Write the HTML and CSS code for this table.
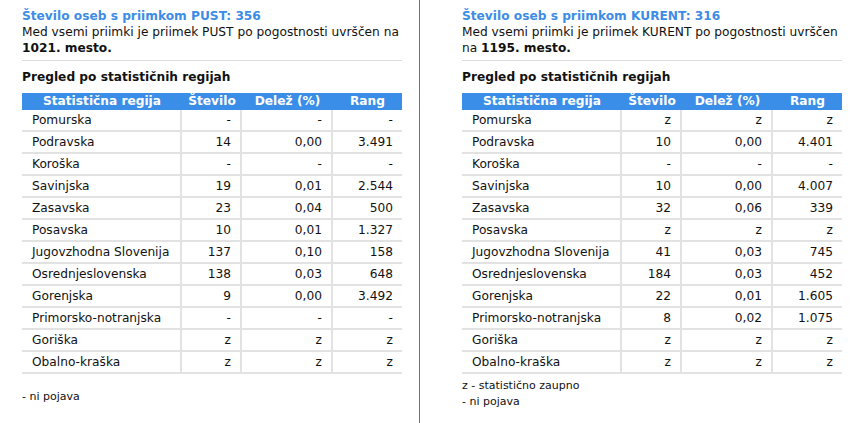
FILE: index.html
```html
<!DOCTYPE html>
<html lang="sl">
<head>
<meta charset="utf-8">
<title>Priimki</title>
<link rel="stylesheet" href="styles.css">
</head>
<body>
<div class="page">
  <section class="panel panel-left">
    <h2 class="title">Število oseb s priimkom PUST: 356</h2>
    <p class="intro">Med vsemi priimki je priimek PUST po pogostnosti uvrščen na <b>1021. mesto.</b></p>
    <hr class="sep">
    <h3 class="subtitle">Pregled po statističnih regijah</h3>
    <table class="stats">
      <thead>
        <tr><th class="c1">Statistična regija</th><th class="c2">Število</th><th class="c3">Delež (%)</th><th class="c4">Rang</th></tr>
      </thead>
      <tbody>
        <tr><td>Pomurska</td><td>-</td><td>-</td><td>-</td></tr>
        <tr><td>Podravska</td><td>14</td><td>0,00</td><td>3.491</td></tr>
        <tr><td>Koroška</td><td>-</td><td>-</td><td>-</td></tr>
        <tr><td>Savinjska</td><td>19</td><td>0,01</td><td>2.544</td></tr>
        <tr><td>Zasavska</td><td>23</td><td>0,04</td><td>500</td></tr>
        <tr><td>Posavska</td><td>10</td><td>0,01</td><td>1.327</td></tr>
        <tr><td>Jugovzhodna Slovenija</td><td>137</td><td>0,10</td><td>158</td></tr>
        <tr><td>Osrednjeslovenska</td><td>138</td><td>0,03</td><td>648</td></tr>
        <tr><td>Gorenjska</td><td>9</td><td>0,00</td><td>3.492</td></tr>
        <tr><td>Primorsko-notranjska</td><td>-</td><td>-</td><td>-</td></tr>
        <tr><td>Goriška</td><td>z</td><td>z</td><td>z</td></tr>
        <tr><td>Obalno-kraška</td><td>z</td><td>z</td><td>z</td></tr>
      </tbody>
    </table>
    <div class="notes notes-left">
      <p>- ni pojava</p>
    </div>
  </section>
  <section class="panel panel-right">
    <h2 class="title">Število oseb s priimkom KURENT: 316</h2>
    <p class="intro">Med vsemi priimki je priimek KURENT po pogostnosti uvrščen na <b>1195. mesto.</b></p>
    <hr class="sep">
    <h3 class="subtitle">Pregled po statističnih regijah</h3>
    <table class="stats">
      <thead>
        <tr><th class="c1">Statistična regija</th><th class="c2">Število</th><th class="c3">Delež (%)</th><th class="c4">Rang</th></tr>
      </thead>
      <tbody>
        <tr><td>Pomurska</td><td>z</td><td>z</td><td>z</td></tr>
        <tr><td>Podravska</td><td>10</td><td>0,00</td><td>4.401</td></tr>
        <tr><td>Koroška</td><td>-</td><td>-</td><td>-</td></tr>
        <tr><td>Savinjska</td><td>10</td><td>0,00</td><td>4.007</td></tr>
        <tr><td>Zasavska</td><td>32</td><td>0,06</td><td>339</td></tr>
        <tr><td>Posavska</td><td>z</td><td>z</td><td>z</td></tr>
        <tr><td>Jugovzhodna Slovenija</td><td>41</td><td>0,03</td><td>745</td></tr>
        <tr><td>Osrednjeslovenska</td><td>184</td><td>0,03</td><td>452</td></tr>
        <tr><td>Gorenjska</td><td>22</td><td>0,01</td><td>1.605</td></tr>
        <tr><td>Primorsko-notranjska</td><td>8</td><td>0,02</td><td>1.075</td></tr>
        <tr><td>Goriška</td><td>z</td><td>z</td><td>z</td></tr>
        <tr><td>Obalno-kraška</td><td>z</td><td>z</td><td>z</td></tr>
      </tbody>
    </table>
    <div class="notes notes-right">
      <p>z - statistično zaupno</p>
      <p>- ni pojava</p>
    </div>
  </section>
</div>
</body>
</html>
```

FILE: styles.css
```css
html, body {
  margin: 0;
  padding: 0;
  background: #ffffff;
}
body {
  font-family: "DejaVu Sans", Verdana, sans-serif;
  font-size: 12.2px;
  line-height: 16px;
  color: #111111;
}
.page {
  display: flex;
  height: 423px;
}
.panel {
  box-sizing: border-box;
  padding-top: 8px;
}
.panel-left {
  width: 420px;
  padding-left: 22px;
  padding-right: 15px;
  border-right: 1px solid #3b80cf;
}
.panel-right {
  width: 422px;
  padding-left: 42px;
  padding-right: 0;
}
.title {
  margin: 0;
  font-size: 12.2px;
  line-height: 16px;
  font-weight: bold;
  color: #3d8ce6;
}
.intro {
  margin: 0;
}
.intro b {
  font-weight: bold;
}
.sep {
  margin: 4px 0 0 0;
  border: 0;
  border-top: 1px solid #dddddd;
  height: 0;
  width: 380px;
}
.subtitle {
  margin: 8px 0 0 0;
  font-size: 12.2px;
  line-height: 16px;
  font-weight: bold;
}
.stats {
  margin-top: 8px;
  width: 380px;
  border-collapse: separate;
  border-spacing: 0;
  table-layout: fixed;
}
.stats th {
  background: #3a8ee8;
  color: #ffffff;
  font-size: 12.2px;
  font-weight: bold;
  text-align: center;
  height: 17px;
  padding: 0;
  line-height: 17px;
}
.stats .c1 { width: 160px; }
.stats .c2 { width: 60px; }
.stats .c3 { width: 91px; }
.stats .c4 { width: 69px; }
.stats td {
  height: 20px;
  padding: 0 9px 0 10px;
  text-align: right;
  border-bottom: 2px solid #e2e2e2;
  border-right: 2px solid #e2e2e2;
  line-height: 20px;
  white-space: nowrap;
}
.stats td:first-child {
  text-align: left;
}
.stats td:last-child {
  border-right: 0;
}
.notes p {
  margin: 0;
  font-size: 11px;
  line-height: 16px;
}
.notes-left {
  margin-top: 15px;
}
.notes-right {
  margin-top: 4px;
}
```
